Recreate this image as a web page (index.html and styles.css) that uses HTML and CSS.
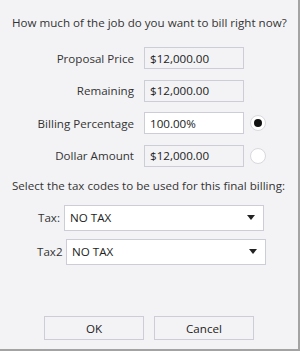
FILE: index.html
```html
<!DOCTYPE html>
<html>
    <head>
        <title>Final Billing</title>
        <link rel="stylesheet" href="styles.css">
    </head>
    <body>
        <div class="dialog">
            <p class="prompt">How much of the job do you want to bill right now?</p>

            <div class="amounts">
                <label class="label">Proposal Price</label>
                <input class="field readonly" type="text" value="$12,000.00" readonly>
                <span></span>

                <label class="label">Remaining</label>
                <input class="field readonly" type="text" value="$12,000.00" readonly>
                <span></span>

                <label class="label">Billing Percentage</label>
                <input class="field" type="text" value="100.00%">
                <span class="radio checked"></span>

                <label class="label">Dollar Amount</label>
                <input class="field readonly" type="text" value="$12,000.00" readonly>
                <span class="radio"></span>
            </div>

            <p class="prompt">Select the tax codes to be used for this final billing:</p>

            <div class="taxrow tax1">
                <label class="label">Tax:</label>
                <div class="combo"><span>NO TAX</span><span class="arrow"></span></div>
            </div>
            <div class="taxrow tax2">
                <label class="label">Tax2</label>
                <div class="combo"><span>NO TAX</span><span class="arrow"></span></div>
            </div>

            <div class="buttons">
                <button>OK</button>
                <button>Cancel</button>
            </div>
        </div>
    </body>
</html>
```

FILE: styles.css
```css
html, body {
    margin: 0;
    padding: 0;
}

body {
    font-family: "Open Sans", "Noto Sans", sans-serif;
    font-size: 11.6px;
    color: #333;
    background: #f3f3f6;
}

.dialog {
    box-sizing: border-box;
    width: 300px;
    height: 351px;
    border-right: 2px solid #a3a3a3;
    border-bottom: 2px solid #a3a3a3;
    display: flex;
    flex-direction: column;
}

.prompt {
    margin: 0;
    padding-left: 12px;
    white-space: nowrap;
    line-height: 16px;
}

.dialog > .prompt:first-child {
    margin-top: 15px;
}

.amounts {
    display: grid;
    grid-template-columns: 141px 100px 16px;
    column-gap: 3px;
    row-gap: 10.5px;
    margin-top: 16px;
    align-items: center;
}

.label {
    text-align: right;
    white-space: nowrap;
}

.amounts .label {
    margin-right: 7px;
}

.field {
    box-sizing: border-box;
    width: 100px;
    height: 22px;
    margin: 0;
    padding: 0 5px;
    border: 1px solid #cdcdd8;
    font: inherit;
    color: #222;
    background: #fff;
    outline: none;
}

.field.readonly {
    background: #f3f3f6;
}

.radio {
    box-sizing: border-box;
    width: 16px;
    height: 16px;
    margin-left: 3px;
    border: 1px solid #d8d8de;
    border-radius: 50%;
    background: #fff;
    display: flex;
    align-items: center;
    justify-content: center;
}

.radio.checked::after {
    content: "";
    width: 8px;
    height: 8px;
    border-radius: 50%;
    background: #111;
}

.amounts + .prompt {
    margin-top: 11px;
}

.taxrow {
    display: flex;
    align-items: center;
    gap: 4px;
    padding-left: 37px;
}

.tax1 {
    margin-top: 11px;
}

.tax1 .label {
    width: 23px;
}

.tax2 {
    margin-top: 8px;
}

.tax2 .label {
    width: 25px;
}

.combo {
    box-sizing: border-box;
    width: 200px;
    height: 26px;
    border: 1px solid #cdcdd8;
    background: #fff;
    color: #222;
    display: flex;
    align-items: center;
    justify-content: space-between;
    padding: 0 8px 0 5px;
}

.arrow {
    width: 0;
    height: 0;
    border-left: 4px solid transparent;
    border-right: 4px solid transparent;
    border-top: 5px solid #222;
}

.buttons {
    margin-top: auto;
    margin-bottom: 9px;
    display: flex;
    gap: 10px;
    padding-left: 44px;
}

.buttons button {
    box-sizing: border-box;
    width: 100px;
    height: 24px;
    border: 1px solid #cdcdd8;
    background: #f3f3f6;
    font: inherit;
    color: #222;
}
```
